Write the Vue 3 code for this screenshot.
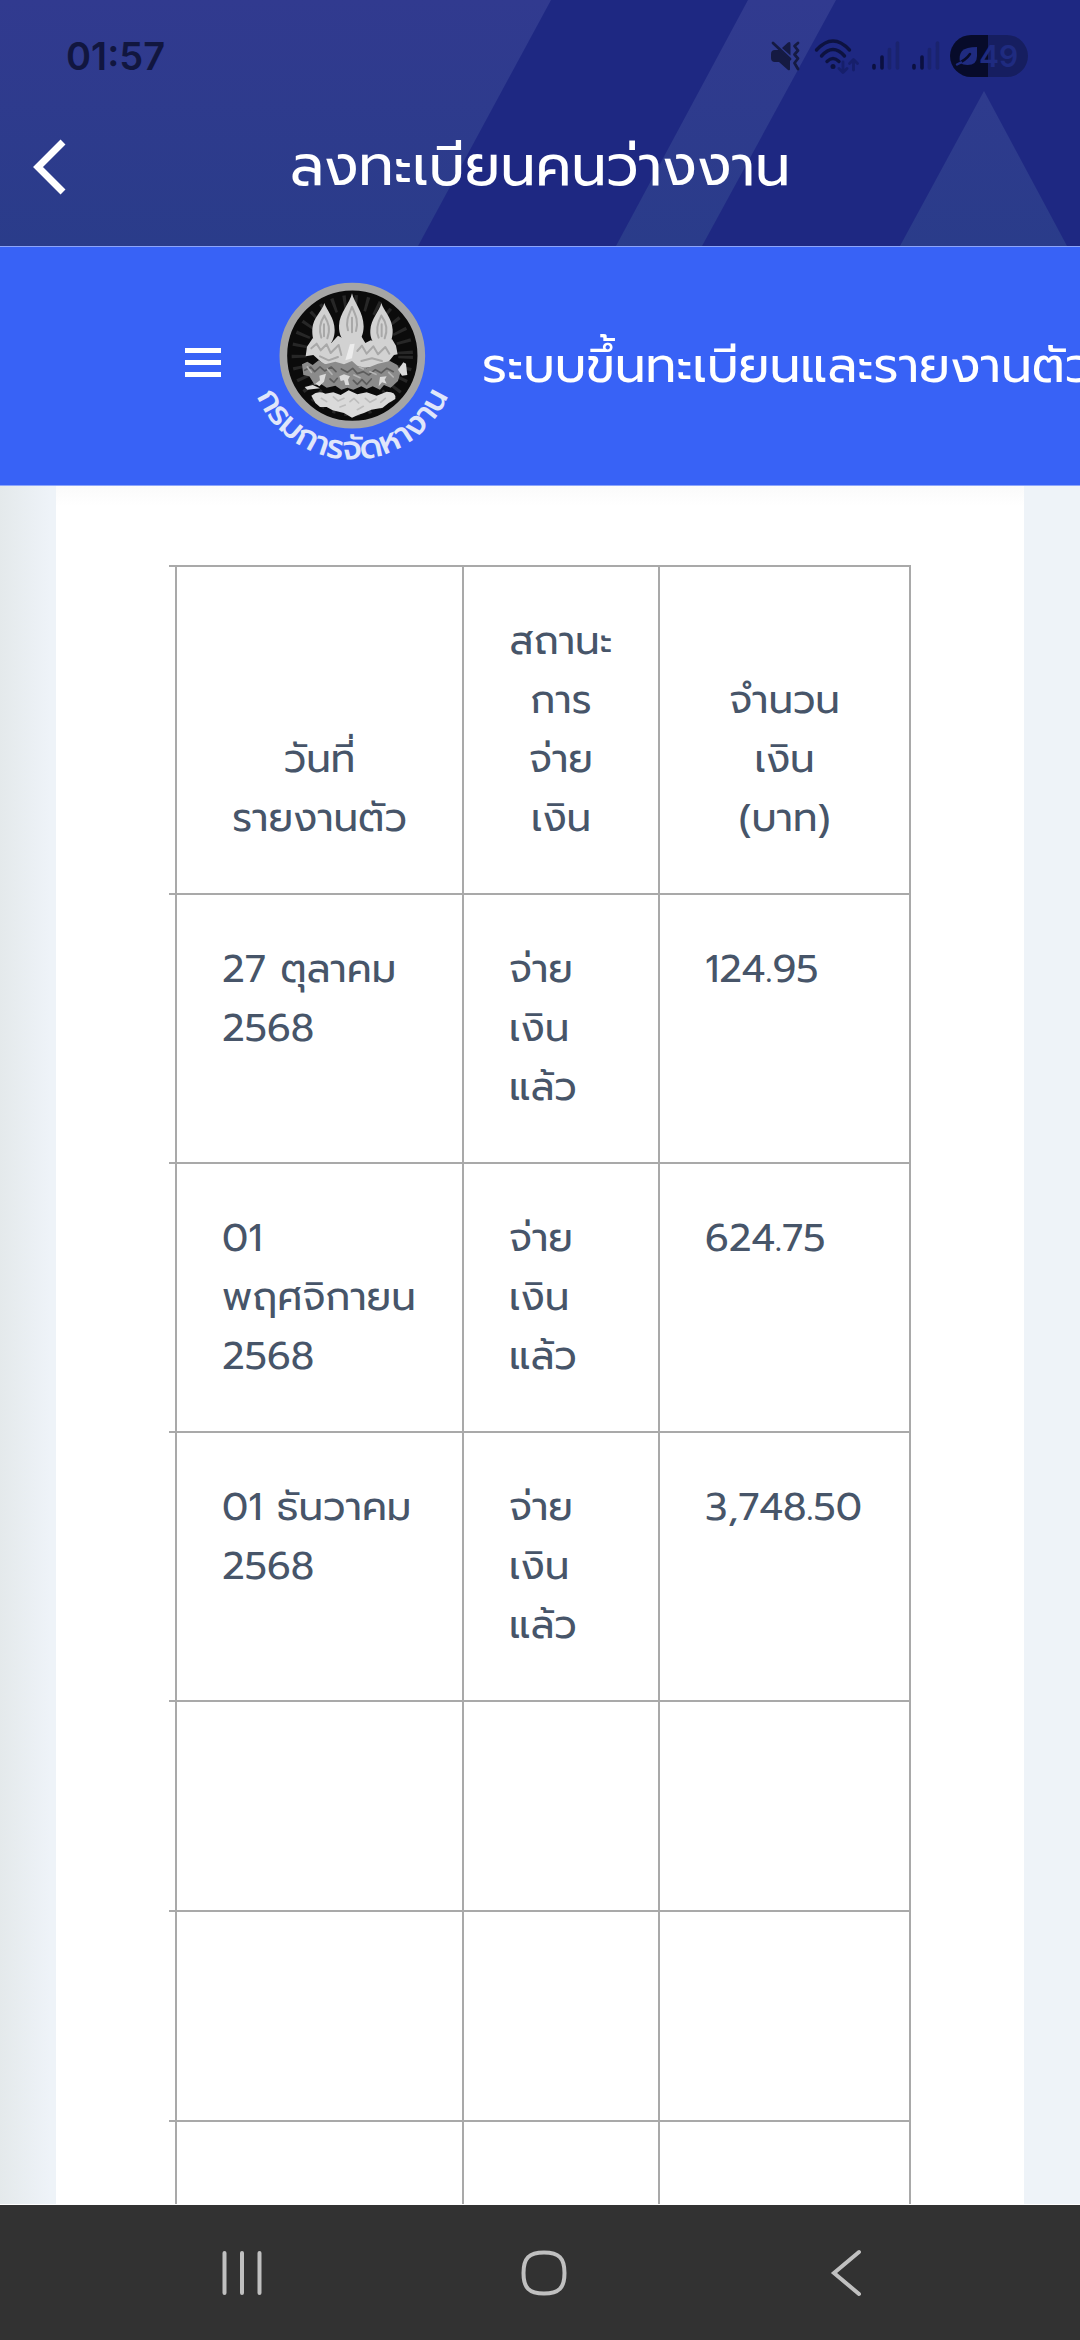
<template>
  <div class="screen">
    <header class="app-header">
      <svg class="header-shapes" viewBox="0 0 1080 246" preserveAspectRatio="none" aria-hidden="true">
        <defs>
          <linearGradient id="shape" x1="0" y1="0" x2="0" y2="246" gradientUnits="userSpaceOnUse">
            <stop offset="0" stop-color="#313a8f" />
            <stop offset="1" stop-color="#2a3c8a" />
          </linearGradient>
        </defs>
        <g fill="url(#shape)">
          <path d="M0 0H551L418 246H0Z" />
          <path d="M748 0H836L702 246H616Z" />
          <path d="M984 91L1067 246H900Z" />
        </g>
      </svg>

      <div class="status-bar">
        <time class="clock">01:57</time>
        <div class="status-icons">
          <!-- muted, vibrate -->
          <svg width="30" height="32" viewBox="0 0 30 32">
            <g fill="#151a42">
              <path d="M1 14Q1 10 5 10H9L20 20V29Q20 31 18 30L9 22H5Q1 22 1 18Z" />
              <path d="M12 8L18 2.500Q20.500 1 20.500 4V15.500Z" />
            </g>
            <g fill="none" stroke="#151a42" stroke-width="2.800" stroke-linecap="round" stroke-linejoin="round">
              <path d="M3 3L20 19" />
              <path d="M28 3L24.500 6L28 10.500L24.500 14.500L28 18.500L24.500 23L28 29" />
            </g>
          </svg>
          <!-- wifi with traffic arrows -->
          <svg class="wifi" width="46" height="36" viewBox="0 0 46 36">
            <g fill="none" stroke="#0d1240" stroke-width="3.400" stroke-linecap="round">
              <path d="M2.500 12Q19 -6 35.500 12" />
              <path d="M7.500 18Q19 5 30.500 18" />
              <path d="M13 23.500Q19 17.500 25 23.500" />
            </g>
            <circle cx="19" cy="28.500" r="2.500" fill="#0d1240" />
            <g fill="none" stroke="#161f6b" stroke-width="2.800" stroke-linecap="round" stroke-linejoin="round">
              <path d="M29 24V34M25 30.500L29 34.500L33 30.500" />
              <path d="M39.500 32V22M35.500 25.500L39.500 21.500L43.500 25.500" />
            </g>
          </svg>
          <svg v-for="sim in 2" :key="sim" width="30" height="32" viewBox="0 0 30 32">
            <g fill="none" stroke-width="3.600" stroke-linecap="round">
              <path stroke="#0b1040" d="M4 25.500V28M12 17V28" />
              <path stroke="#1a236e" d="M19.500 9.500V28M27.500 3V28" />
            </g>
          </svg>
          <div class="battery">
            <svg width="24" height="22" viewBox="0 0 24 22">
              <path d="M22 2V11Q22 20 12.500 20Q8 20 5 18Q3.500 10 7 6Q11 2 22 2Z" fill="#1f2b80" />
              <path d="M15 9Q11 15 2 19" fill="none" stroke="#070b2a" stroke-width="2.500" stroke-linecap="round" />
              <path d="M2 19.500L6 17.500" stroke="#1f2b80" stroke-width="2.500" stroke-linecap="round" />
            </svg>
            <span>49</span>
          </div>
        </div>
      </div>

      <div class="title-bar">
        <button class="back" type="button" aria-label="ย้อนกลับ">
          <svg width="34" height="58" viewBox="0 0 34 58">
            <path d="M30 4L5 29L30 54" fill="none" stroke="#fff" stroke-width="7" />
          </svg>
        </button>
        <h1>ลงทะเบียนคนว่างงาน</h1>
      </div>
    </header>

    <div class="site-header">
      <button class="menu" type="button" aria-label="เมนู">
        <span></span>
        <span></span>
        <span></span>
      </button>

      <svg class="logo" width="200" height="190" viewBox="0 0 200 190">
        <defs>
          <path id="ring-text" d="M-3.500 84.700A103.800 103.800 0 0 0 204.100 84.700" />
        </defs>
        <g transform="translate(18 4) scale(.3333)">
          <circle cx="247" cy="242" r="207" fill="#0b0b0b" stroke="#a5a5a5" stroke-width="23" />
          <circle cx="247" cy="242" r="160" fill="none" stroke="#272727" stroke-width="44" stroke-dasharray="9 24" />
          <!-- crowns -->
          <g fill="#d2d2d2">
            <path d="M246 55C252 82 281 112 281 154C281 180 270 197 262 207H230C218 196 206 180 207 152C208 115 240 85 246 55Z" />
            <path d="M163 84C170 106 194 128 194 166C194 188 186 200 179 212L140 214C130 198 126 184 127 162C129 128 156 110 163 84Z" />
            <path d="M334 84C341 108 366 128 368 164C369 186 362 202 357 214L318 212C306 200 300 186 301 166C303 130 328 110 334 84Z" />
            <path d="M128 190L111 215L107 244L130 240L146 254L160 268L240 282L345 274L372 240L383 238L378 212L366 192L340 206L302 196L286 204L274 184L246 204L204 182L184 204Z" />
          </g>
          <g fill="none" stroke="#a8a8a8" stroke-width="6" stroke-linecap="round" stroke-linejoin="round">
            <path d="M246 96C236 120 226 140 234 166M246 96C258 122 266 140 258 168M246 128V172" />
            <path d="M163 122C150 142 146 164 154 188M163 122C176 144 182 162 172 190M162 148V184" />
            <path d="M334 122C322 144 316 164 326 188M334 122C350 144 354 166 344 190M335 148V184" />
            <path d="M124 220L140 206L152 226L170 208L182 234L206 210L214 240" />
            <path d="M262 228L276 212L290 236L310 214L324 238L346 216L358 236" />
            <path d="M150 244L176 256L204 246M274 258L306 250L336 258" />
          </g>
          <path d="M240 208L254 206L246 250L226 256Z" fill="#ececec" />
          <!-- lions -->
          <path d="M96 268L112 260L128 270L146 256L166 268L196 260L222 268L246 258L262 272L290 280L324 266L360 258L382 270L392 290L384 318L362 338L342 330L330 344L308 334L290 342L274 334L250 344L232 338L214 344L196 332L170 338L152 326L134 330L118 304L100 300Z" fill="#8b8b8b" />
          <g fill="none" stroke="#5c5c5c" stroke-width="5" stroke-linecap="round" stroke-linejoin="round">
            <path d="M104 286L122 276L134 290L150 276L164 288L184 276L198 290" />
            <path d="M214 282L232 292L248 280L262 296L280 290L296 300L316 284L334 294L350 280L370 290" />
            <path d="M180 312L192 322L202 310M250 316L262 328L276 314L290 328L304 312" />
          </g>
          <g fill="none" stroke="#b4b4b4" stroke-width="5" stroke-linecap="round">
            <path d="M112 276L124 292M172 282L186 298M252 300L270 308M300 290L318 298M356 292L370 306M268 276L280 282" />
          </g>
          <g fill="#dadada">
            <path d="M148 302L168 296L162 320L148 334L136 326L150 316Z" />
            <path d="M208 304L222 298L240 304L234 314L238 330H226L222 316L212 318Z" />
            <path d="M330 306L350 304L344 314L350 326L336 322L326 334Z" />
            <path d="M384 284L400 262L408 266L412 300L396 302Z" />
            <path d="M104 336L128 330L150 340L112 344Z" />
          </g>
          <!-- cloud -->
          <path d="M124 362Q144 346 166 356L190 352L212 360L236 346L262 358L290 352L320 362L350 350Q380 350 376 372L356 384L338 398L304 404L282 414L264 420L246 428L222 414L188 406L170 396L150 396L136 384Z" fill="#dadada" />
          <g fill="none" stroke="#bdbdbd" stroke-width="5" stroke-linejoin="round" stroke-linecap="round">
            <path d="M154 370L170 380M190 366L204 378L222 370M240 380L252 370L266 384M286 370L300 382L318 372M332 382L346 370M210 396L226 390M262 404L280 394" />
          </g>
        </g>
        <text class="logo-text">
          <textPath href="#ring-text" startOffset="50%" text-anchor="middle">กรมการจัดหางาน</textPath>
        </text>
      </svg>

      <span class="site-name">ระบบขึ้นทะเบียนและรายงานตัว</span>
    </div>

    <main class="page">
      <section class="card">
        <table>
          <colgroup>
            <col class="col-edge" />
            <col class="col-date" />
            <col class="col-status" />
            <col />
          </colgroup>
          <thead>
            <tr>
              <td class="edge"></td>
              <th v-for="title in columns" :key="title" scope="col">{{ title }}</th>
            </tr>
          </thead>
          <tbody>
            <tr v-for="(row, i) in rows" :key="i">
              <td class="edge"></td>
              <td>{{ row.date }}</td>
              <td>{{ row.status }}</td>
              <td>{{ row.amount }}</td>
            </tr>
          </tbody>
        </table>
      </section>
    </main>

    <nav class="system-nav">
      <button type="button" aria-label="แอปล่าสุด">
        <svg width="48" height="48" viewBox="0 0 48 48">
          <path d="M6.500 4V44M24 4V44M41.500 4V44" />
        </svg>
      </button>
      <button type="button" aria-label="หน้าหลัก">
        <svg width="48" height="48" viewBox="0 0 48 48">
          <path d="M24 3.500C39 3.500 44.500 9 44.500 24S39 44.500 24 44.500S3.500 39 3.500 24S9 3.500 24 3.500Z" />
        </svg>
      </button>
      <button type="button" aria-label="กลับ">
        <svg width="48" height="48" viewBox="0 0 48 48">
          <path d="M37 3L12 24L37 45" />
        </svg>
      </button>
    </nav>
  </div>
</template>

<script setup>
const columns = ['วันที่รายงานตัว', 'สถานะการจ่ายเงิน', 'จำนวนเงิน (บาท)']

const rows = [
  { date: '27 ตุลาคม 2568', status: 'จ่ายเงินแล้ว', amount: '124.95' },
  { date: '01 พฤศจิกายน 2568', status: 'จ่ายเงินแล้ว', amount: '624.75' },
  { date: '01 ธันวาคม 2568', status: 'จ่ายเงินแล้ว', amount: '3,748.50' },
  { date: '', status: '', amount: '' },
  { date: '', status: '', amount: '' },
  { date: '', status: '', amount: '' }
]
</script>

<style>
body {
  margin: 0;
}
</style>

<style scoped>
.screen {
  display: flex;
  flex-direction: column;
  height: 100vh;
  overflow: hidden;
  font-family: Prompt, "Noto Sans Thai", "Noto Sans", sans-serif;
  background: #eef3f8;
}

button {
  padding: 0;
  border: 0;
  background: none;
  cursor: pointer;
}

svg {
  display: block;
}

/* app header */
.app-header {
  position: relative;
  flex: none;
  padding-bottom: 24px;
  background: #1e2882;
}

.header-shapes {
  position: absolute;
  inset: 0;
  width: 100%;
  height: 100%;
}

.status-bar {
  position: relative;
  display: flex;
  align-items: center;
  justify-content: space-between;
  height: 112px;
  padding: 0 52px 0 66px;
}

.clock {
  font-family: Inter, "Open Sans", sans-serif;
  font-size: 38px;
  font-weight: 600;
  color: #11163f;
}

.status-icons {
  display: flex;
  align-items: center;
  gap: 10px;
}

.wifi {
  margin-left: 4px;
}

.battery {
  display: flex;
  align-items: center;
  height: 42px;
  box-sizing: border-box;
  width: 78px;
  padding-left: 5px;
  border-radius: 21px;
  background: linear-gradient(90deg, #070b2a 49%, #161e60 49%);
  font-family: Inter, "Open Sans", sans-serif;
  font-size: 30px;
  font-weight: 600;
  color: #1f2b80;
}

.title-bar {
  position: relative;
  display: grid;
  grid-template-columns: 80px 1fr 80px;
  align-items: center;
  height: 110px;
}

.back {
  margin-left: 33px;
}

h1 {
  margin: 0;
  font-size: 56px;
  font-weight: 400;
  line-height: 80px;
  text-align: center;
  color: #fff;
}

/* site header */
.site-header {
  flex: none;
  display: flex;
  align-items: center;
  box-sizing: border-box;
  height: 240px;
  padding-left: 185px;
  border-top: 1px solid #8ca5fb;
  border-bottom: 1px solid #8ca5fb;
  background: #3862f6;
  color: #fff;
  overflow: hidden;
}

.menu {
  flex: none;
  display: flex;
  flex-direction: column;
  gap: 7px;
  width: 36px;
  margin-right: 31px;
  padding-bottom: 7px;
}

.menu span {
  height: 5px;
  background: #fff;
}

.logo {
  flex: none;
  margin-right: 30px;
  overflow: visible;
}

.logo-text {
  font-size: 33px;
  font-weight: 500;
  fill: #e0e6fa;
}

.site-name {
  font-size: 49px;
  line-height: 72px;
  white-space: nowrap;
}

/* page */
.page {
  flex: 1;
  min-height: 0;
  padding: 0 56px;
  overflow: hidden;
  background: linear-gradient(90deg, #e4e9eb, #eef3f8 50px);
}

.card {
  min-height: 100%;
  box-sizing: border-box;
  padding: 79px 113px;
  background: linear-gradient(#fafafa, #fff 20px);
}

table {
  width: 100%;
  table-layout: fixed;
  border-collapse: collapse;
  font-size: 39px;
  line-height: 59px;
  color: #475569;
}

.col-edge {
  width: 7px;
}

.col-date {
  width: 287px;
}

.col-status {
  width: 196px;
}

th,
td {
  box-sizing: border-box;
  height: 210px;
  padding: 44px 45px 46px;
  border: 2px solid #a9a9a9;
  font-weight: 400;
  text-align: left;
  vertical-align: top;
}

th {
  text-align: center;
  vertical-align: bottom;
}

.edge {
  padding: 0;
  border-left: 0;
}

/* system navigation */
.system-nav {
  flex: none;
  display: grid;
  grid-template-columns: repeat(3, 1fr);
  align-items: center;
  justify-items: center;
  height: 136px;
  padding: 0 83px 0 91px;
  border-top: 1px solid #fff;
  box-sizing: border-box;
  background: #323232;
}

.system-nav path {
  fill: none;
  stroke: #c0c0c0;
  stroke-width: 4;
  stroke-linecap: round;
}
</style>
